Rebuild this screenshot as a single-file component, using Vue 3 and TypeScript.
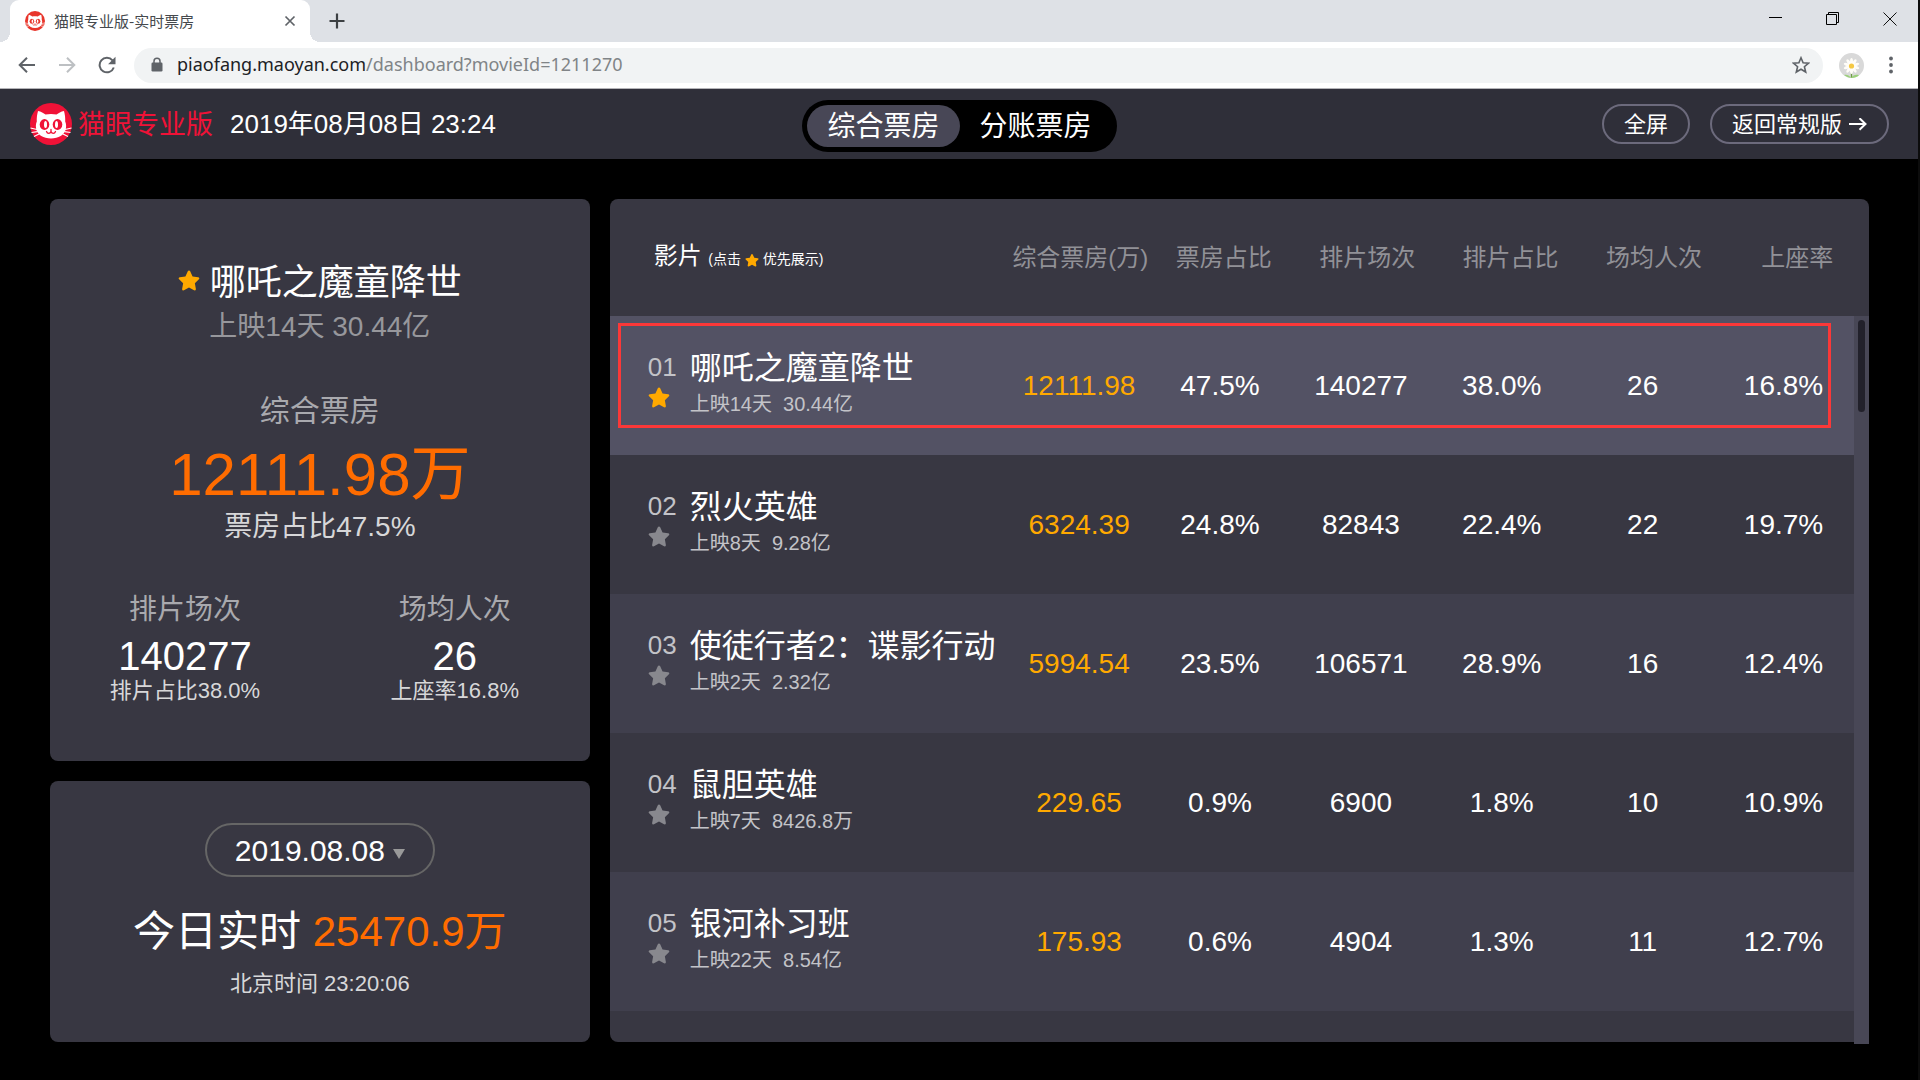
<script setup lang="ts">
import { ref } from 'vue'

interface Movie {
  rank: string
  title: string
  days: string
  total: string
  box: string
  boxShare: string
  shows: string
  showShare: string
  average: string
  seatRate: string
}

const STAR =
  'M12 1.6c.6 0 1 .4 1.300.9l2.600 5.600 6.100.8c1.200.200 1.700 1.500.8 2.400l-4.400 4.300 1.100 6.100c.2 1.200-1 2-2 1.500L12 20.200l-5.500 3c-1 .5-2.200-.3-2-1.500l1.100-6.100-4.400-4.300c-.9-.9-.4-2.200.8-2.400l6.100-.8 2.600-5.600c.3-.5.700-.9 1.300-.9z'

const columns = ['综合票房(万)', '票房占比', '排片场次', '排片占比', '场均人次', '上座率']

const movies: Movie[] = [
  { rank: '01', title: '哪吒之魔童降世', days: '上映14天', total: '30.44亿', box: '12111.98', boxShare: '47.5%', shows: '140277', showShare: '38.0%', average: '26', seatRate: '16.8%' },
  { rank: '02', title: '烈火英雄', days: '上映8天', total: '9.28亿', box: '6324.39', boxShare: '24.8%', shows: '82843', showShare: '22.4%', average: '22', seatRate: '19.7%' },
  { rank: '03', title: '使徒行者2：谍影行动', days: '上映2天', total: '2.32亿', box: '5994.54', boxShare: '23.5%', shows: '106571', showShare: '28.9%', average: '16', seatRate: '12.4%' },
  { rank: '04', title: '鼠胆英雄', days: '上映7天', total: '8426.8万', box: '229.65', boxShare: '0.9%', shows: '6900', showShare: '1.8%', average: '10', seatRate: '10.9%' },
  { rank: '05', title: '银河补习班', days: '上映22天', total: '8.54亿', box: '175.93', boxShare: '0.6%', shows: '4904', showShare: '1.3%', average: '11', seatRate: '12.7%' },
]

const starred = ref('01')
const mode = ref<'total' | 'split'>('total')
const day = ref('2019.08.08')
</script>

<template>
  <div class="window">
    <svg class="defs" aria-hidden="true">
      <symbol id="cat" viewBox="0 0 42 42">
        <circle cx="21" cy="21" r="21" fill="currentColor" />
        <path fill="#fff" d="M8 8c3 .6 5.500 2 7.500 3.600 3.400-.8 7.600-.8 11 0C28.500 10 31 8.600 34 8c1 3.500 1.400 7 1.200 10.500 1 2.200 1.200 5 .6 7.500C34.400 32 28.500 35.500 21 35.500S7.600 32 6.200 26c-.6-2.500-.4-5.300.6-7.500C6.600 15 7 11.500 8 8z" />
        <g fill="currentColor">
          <ellipse cx="14.500" cy="21.500" rx="4.800" ry="5.400" />
          <ellipse cx="27.500" cy="21.500" rx="4.800" ry="5.400" />
        </g>
        <g fill="#fff">
          <ellipse cx="15.500" cy="21.500" rx="1.500" ry="3.600" />
          <ellipse cx="26.500" cy="21.500" rx="1.500" ry="3.600" />
        </g>
        <path fill="none" stroke="currentColor" stroke-width="1.300" stroke-linecap="round" d="M16.500 28.500c.8 2.400 3.700 2.400 4.500 0 .8 2.400 3.700 2.400 4.500 0M21 26.500v2" />
        <path fill="none" stroke="#fff" stroke-width="1.200" d="M.5 25l6.500 1.500M1.500 29.500l6-.8M4 33.500l5-2.500M41.500 25L35 26.500M40.500 29.500l-6-.8M38 33.500L33 31" />
      </symbol>
    </svg>

    <div class="tabstrip">
      <div class="tab">
        <svg class="favicon"><use href="#cat" /></svg>
        <span class="tab-title">猫眼专业版-实时票房</span>
        <button class="bare" aria-label="关闭标签页">
          <svg width="12" height="12" viewBox="0 0 12 12"><path d="M1.500 1.500l9 9M10.500 1.500l-9 9" stroke="#5f6368" stroke-width="1.700" /></svg>
        </button>
      </div>
      <button class="bare new-tab" aria-label="新标签页">
        <svg width="16" height="16" viewBox="0 0 16 16"><path d="M8 .5v15M.5 8h15" stroke="#3c4043" stroke-width="2.200" /></svg>
      </button>
      <div class="controls">
        <button class="bare" aria-label="最小化">
          <svg width="14" height="14" viewBox="0 0 14 14"><path d="M0 5.500h13" stroke="#000" /></svg>
        </button>
        <button class="bare" aria-label="还原">
          <svg width="14" height="14" viewBox="0 0 14 14"><path d="M.5 2.500h10v10H.5zM2.500 2.500v-2h10v10h-2" fill="none" stroke="#000" /></svg>
        </button>
        <button class="bare" aria-label="关闭">
          <svg width="14" height="14" viewBox="0 0 14 14"><path d="M.5.5l13 13M13.500.5l-13 13" stroke="#111" /></svg>
        </button>
      </div>
    </div>

    <div class="toolbar">
      <div class="nav">
        <button class="bare" aria-label="后退">
          <svg width="18" height="18" viewBox="0 0 18 18"><path d="M17 9H2M9 1.700L1.700 9 9 16.300" fill="none" stroke="#5f6368" stroke-width="2" /></svg>
        </button>
        <button class="bare" aria-label="前进">
          <svg width="18" height="18" viewBox="0 0 18 18"><path d="M1 9h15M9 1.700L16.300 9 9 16.300" fill="none" stroke="#bdc0c3" stroke-width="2" /></svg>
        </button>
        <button class="bare" aria-label="重新加载">
          <svg width="18" height="18" viewBox="0 0 18 18"><path d="M15.800 11.500A7.300 7.300 0 1 1 14.500 4.300" fill="none" stroke="#5f6368" stroke-width="2" /><path d="M17.500.8v7.400h-7.400z" fill="#5f6368" /></svg>
        </button>
      </div>
      <div class="omnibox">
        <svg width="12" height="16" viewBox="0 0 12 16"><rect x=".5" y="5.500" width="11" height="9" rx="1.200" fill="#5f6368" /><path d="M3 6V4.200a3 3 0 0 1 6 0V6" fill="none" stroke="#5f6368" stroke-width="1.500" /></svg>
        <a class="url" href="#"><span class="host">piaofang.maoyan.com</span>/dashboard?movieId=1211270</a>
        <button class="bare" aria-label="收藏">
          <svg width="18" height="18" viewBox="0 0 18 18"><path d="M9 1.800l2.100 5 5.400.4-4.100 3.500 1.300 5.300L9 13.200 4.300 16l1.300-5.300L1.500 7.200l5.400-.4z" fill="none" stroke="#5f6368" stroke-width="1.600" /></svg>
        </button>
      </div>
      <svg class="avatar" width="25" height="25" viewBox="0 0 25 25">
        <circle cx="12.500" cy="12.500" r="12.500" fill="#d9d9d9" />
        <path d="M12.500 15v10" stroke="#6f9a45" stroke-width="1.300" />
        <path d="M5 22c2.500-.8 5 0 7 2.700 2-2.700 5-3.500 8-2.500-4 3.600-10 3.800-15-.2z" fill="#9bd07a" />
        <g fill="#fffdf8">
          <ellipse v-for="i in 10" :key="i" cx="12.500" cy="8.500" rx="1.500" ry="3.500" :transform="`rotate(${i * 36} 12.500 13)`" />
        </g>
        <circle cx="12.500" cy="13" r="2.600" fill="#f5c842" />
      </svg>
      <button class="bare menu" aria-label="菜单">
        <svg width="4" height="18" viewBox="0 0 4 18" fill="#5f6368"><circle cx="2" cy="2.500" r="1.900" /><circle cx="2" cy="9" r="1.900" /><circle cx="2" cy="15.500" r="1.900" /></svg>
      </button>
    </div>

    <header class="header">
      <div class="brand">
        <svg class="logo"><use href="#cat" /></svg>
        <span class="brand-name">猫眼专业版</span>
        <time class="now">2019年08月08日 23:24</time>
      </div>
      <div class="switch">
        <button :class="{ active: mode === 'total' }" @click="mode = 'total'">综合票房</button>
        <button :class="{ active: mode === 'split' }" @click="mode = 'split'">分账票房</button>
      </div>
      <div class="actions">
        <button class="pill">全屏</button>
        <a class="pill" href="#">返回常规版
          <svg width="18" height="14" viewBox="0 0 18 14"><path d="M0 6h16M10.500.2L16.500 6l-6 5.800" fill="none" stroke="#fff" stroke-width="2" /></svg>
        </a>
      </div>
    </header>

    <main class="main">
      <div class="side">
        <section class="card featured">
          <h1><svg class="star on" viewBox="0 0 24 24"><path :d="STAR" /></svg>哪吒之魔童降世</h1>
          <p class="release">上映14天 30.44亿</p>
          <p class="label">综合票房</p>
          <p class="big">12111.98万</p>
          <p class="share">票房占比47.5%</p>
          <div class="stats">
            <div>
              <p class="stat-label">排片场次</p>
              <p class="stat-value">140277</p>
              <p class="stat-note">排片占比38.0%</p>
            </div>
            <div>
              <p class="stat-label">场均人次</p>
              <p class="stat-value">26</p>
              <p class="stat-note">上座率16.8%</p>
            </div>
          </div>
        </section>
        <section class="card today">
          <div class="date">
            <select v-model="day" aria-label="日期">
              <option>2019.08.08</option>
            </select>
            <svg class="caret" width="12" height="10" viewBox="0 0 12 10"><path d="M0 0h12L6 10z" fill="#999" /></svg>
          </div>
          <p class="live">今日实时 <span>25470.9万</span></p>
          <p class="clock">北京时间 23:20:06</p>
        </section>
      </div>

      <section class="panel">
        <table>
          <thead>
            <tr>
              <th class="film-head">影片 <small>(点击 <svg class="star on" viewBox="0 0 24 24"><path :d="STAR" /></svg> 优先展示)</small></th>
              <th v-for="c in columns" :key="c">{{ c }}</th>
            </tr>
          </thead>
          <tbody>
            <tr v-for="m in movies" :key="m.rank" :class="{ current: m.rank === starred }">
              <td class="film">
                <div class="rank">
                  <span>{{ m.rank }}</span>
                  <button class="bare" :aria-label="'优先展示' + m.title" @click="starred = m.rank">
                    <svg class="star" :class="{ on: m.rank === starred }" viewBox="0 0 24 24"><path :d="STAR" /></svg>
                  </button>
                </div>
                <div>
                  <div class="title">{{ m.title }}</div>
                  <div class="meta">{{ m.days }}&nbsp; {{ m.total }}</div>
                </div>
              </td>
              <td class="box">{{ m.box }}</td>
              <td>{{ m.boxShare }}</td>
              <td>{{ m.shows }}</td>
              <td>{{ m.showShare }}</td>
              <td>{{ m.average }}</td>
              <td>{{ m.seatRate }}</td>
            </tr>
          </tbody>
        </table>
        <div class="scrollbar"><div class="thumb"></div></div>
      </section>
    </main>
  </div>
</template>

<style>
body {
  margin: 0;
  background: #000;
}
</style>

<style scoped>
.window {
  box-sizing: border-box;
  min-height: 100vh;
  display: flex;
  flex-direction: column;
  border-right: 2px solid #0c0c0c;
  background: #000;
  color: #fff;
  font-family: "Liberation Sans", "Noto Sans CJK SC", sans-serif;
}
.defs {
  position: absolute;
  width: 0;
  height: 0;
}
button,
select {
  font-family: inherit;
  color: inherit;
  cursor: pointer;
}
.bare {
  display: flex;
  padding: 0;
  border: 0;
  background: none;
}
p,
h1 {
  margin: 0;
  font-weight: 400;
}
svg {
  flex: none;
}

/* browser chrome */
.tabstrip {
  display: flex;
  align-items: center;
  height: 42px;
  background: #dee1e6;
}
.tab {
  position: relative;
  box-sizing: border-box;
  display: flex;
  align-items: center;
  width: 300px;
  height: 42px;
  margin-left: 10px;
  padding: 0 14px 0 15px;
  border-radius: 9px 9px 0 0;
  background: #fff;
}
.tab::before,
.tab::after {
  content: "";
  position: absolute;
  bottom: 0;
  width: 10px;
  height: 10px;
}
.tab::before {
  left: -10px;
  background: radial-gradient(circle at 0 0, transparent 10px, #fff 10px);
}
.tab::after {
  right: -10px;
  background: radial-gradient(circle at 100% 0, transparent 10px, #fff 10px);
}
.favicon {
  width: 20px;
  height: 20px;
  color: #e8352b;
}
.tab-title {
  flex: 1;
  margin-left: 9px;
  font: 15px/20px "Noto Sans CJK SC", sans-serif;
  color: #45494d;
}
.new-tab {
  margin-left: 19px;
}
.controls {
  display: flex;
  gap: 43px;
  margin-left: auto;
  padding: 0 21px 5px 0;
}
.toolbar {
  display: flex;
  align-items: center;
  height: 46px;
  border-bottom: 1px solid #b4b4b8;
  background: #fff;
}
.nav {
  display: flex;
  gap: 22px;
  padding: 0 18px 0 18px;
}
.omnibox {
  flex: 1;
  display: flex;
  align-items: center;
  height: 35px;
  padding: 0 13px 0 17px;
  border-radius: 18px;
  background: #f1f3f4;
}
.url {
  flex: 1;
  margin-left: 14px;
  padding-bottom: 2px;
  font: 18px/24px "Noto Sans", "Open Sans", sans-serif;
  color: #808487;
  text-decoration: none;
}
.host {
  color: #202124;
}
.avatar {
  margin-left: 16px;
}
.menu {
  margin: 0 25px;
}

/* page header */
.header {
  display: grid;
  grid-template-columns: 1fr auto 1fr;
  align-items: center;
  height: 70px;
  padding: 0 29px 0 30px;
  background: #2f2f39;
}
.brand {
  display: flex;
  align-items: center;
}
.logo {
  width: 42px;
  height: 42px;
  color: #f01237;
}
.brand-name {
  margin-left: 6px;
  padding-top: 2px;
  font-size: 27px;
  line-height: 40px;
  color: #f01237;
}
.now {
  margin-left: 17px;
  font-size: 26px;
  line-height: 40px;
}
.switch {
  display: flex;
  margin-top: 4px;
  padding: 5px;
  border-radius: 26px;
  background: #000;
}
.switch button {
  height: 42px;
  padding: 2px 20px 0;
  border: 0;
  border-radius: 21px;
  background: none;
  font-size: 28px;
  line-height: 40px;
}
.switch .active {
  background: #484756;
}
.actions {
  display: flex;
  justify-content: flex-end;
  gap: 20px;
}
.pill {
  box-sizing: border-box;
  display: flex;
  align-items: center;
  gap: 7px;
  height: 40px;
  padding: 2px 20px 0;
  border: 2px solid #6c6a7c;
  border-radius: 20px;
  background: none;
  font-size: 22px;
  line-height: 34px;
  color: #fff;
  text-decoration: none;
}

/* dashboard */
.main {
  flex: 1;
  display: grid;
  grid-template-columns: 30fr 70fr;
  gap: 20px;
  padding: 40px 49px 38px 50px;
}
.side {
  display: flex;
  flex-direction: column;
  gap: 20px;
}
.card {
  box-sizing: border-box;
  border-radius: 8px;
  background: #383742;
  text-align: center;
}
.featured {
  flex: 1;
  padding-top: 59px;
}
.today {
  padding: 42px 0 43px;
}
.star {
  width: 22px;
  height: 22px;
  fill: #88888e;
}
.star.on {
  fill: #ffa900;
}
h1 {
  display: flex;
  justify-content: center;
  align-items: center;
  gap: 10px;
  font-size: 36px;
  line-height: 50px;
}
h1 .star {
  margin-bottom: 6px;
}
.release {
  font-size: 28px;
  line-height: 38px;
  color: #97979c;
}
.label {
  margin-top: 45px;
  font-size: 30px;
  line-height: 40px;
  color: #a9a9ae;
}
.big {
  margin-top: 6px;
  font-size: 60px;
  line-height: 76px;
  color: #ff6c00;
}
.share {
  font-size: 28px;
  line-height: 28px;
  color: #d7d7d9;
}
.stats {
  display: grid;
  grid-template-columns: 1fr 1fr;
  margin-top: 49px;
}
.stat-label {
  font-size: 28px;
  line-height: 40px;
  color: #a9a9ae;
}
.stat-value {
  margin-top: 2px;
  font-size: 40px;
  line-height: 48px;
}
.stat-note {
  font-size: 22px;
  line-height: 22px;
  color: #d7d7d9;
}
.date {
  position: relative;
  width: 230px;
  margin: 0 auto;
}
.date select {
  display: block;
  box-sizing: border-box;
  width: 100%;
  height: 54px;
  padding: 2px 28px 0;
  border: 2px solid #666;
  border-radius: 27px;
  background: none;
  appearance: none;
  font-size: 30px;
  line-height: 48px;
}
.caret {
  position: absolute;
  right: 30px;
  top: 26px;
  pointer-events: none;
}
.live {
  margin-top: 25px;
  font-size: 42px;
  line-height: 60px;
}
.live span {
  color: #ff6c00;
}
.clock {
  margin-top: 7px;
  font-size: 22px;
  line-height: 30px;
  color: #d7d7d9;
}

/* ranking table */
.panel {
  position: relative;
  border-radius: 8px;
  background: #383742;
}
table,
thead,
tbody {
  display: block;
}
tbody {
  padding-right: 15px;
}
tr {
  position: relative;
  display: grid;
  grid-template-columns: 399px repeat(6, 1fr);
  align-items: center;
}
thead tr {
  height: 117px;
}
tbody tr {
  height: 139px;
}
tbody tr:nth-child(odd) {
  background: #403f4d;
}
tbody tr.current {
  background: #535264;
}
tr.current::after {
  content: "";
  position: absolute;
  inset: 7px 23px 27px 8px;
  border: 3px solid #fb3838;
  pointer-events: none;
}
th {
  padding: 0;
  font-size: 24px;
  line-height: 36px;
  font-weight: 400;
  color: #919197;
  white-space: nowrap;
}
th.film-head {
  padding-left: 44px;
  color: #fff;
  text-align: left;
}
small {
  font-size: 14px;
}
small .star {
  width: 14px;
  height: 14px;
  vertical-align: -3px;
}
td {
  padding: 0;
  font-size: 28px;
  line-height: 40px;
  text-align: center;
}
.film {
  display: flex;
  align-self: start;
  padding: 32px 0 0 38px;
  text-align: left;
}
.rank {
  width: 42px;
  font-size: 26px;
  line-height: 38px;
  color: #c3c3c8;
}
.title {
  font-size: 32px;
  white-space: nowrap;
}
.meta {
  font-size: 20px;
  line-height: 32px;
  color: #c3c3c8;
}
.box {
  color: #ffa900;
}
.scrollbar {
  position: absolute;
  top: 117px;
  right: 0;
  bottom: -2px;
  box-sizing: border-box;
  width: 15px;
  padding: 4px;
  background: #484756;
}
.thumb {
  height: 92px;
  border-radius: 4px;
  background: #22212b;
}
</style>
